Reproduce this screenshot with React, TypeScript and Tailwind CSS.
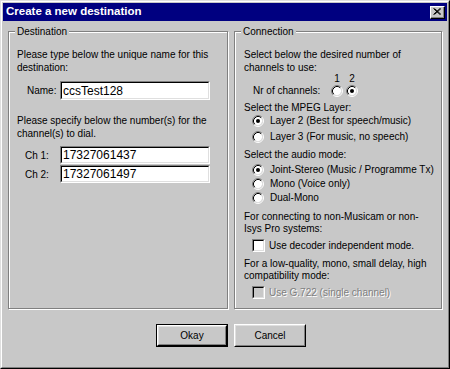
import React from "react";

const Radio = ({ checked = false }: { checked?: boolean }) => (
  <svg width="12" height="12" viewBox="0 0 12 12" className="shrink-0">
    <circle cx="6" cy="6" r="4.2" fill="#fff" />
    <path d="M2.11 9.89 A5.5 5.5 0 0 1 9.89 2.11" fill="none" stroke="#808080" />
    <path d="M9.89 2.11 A5.5 5.5 0 0 1 2.11 9.89" fill="none" stroke="#fff" />
    <path d="M2.82 9.18 A4.5 4.5 0 0 1 9.18 2.82" fill="none" stroke="#000" />
    <path d="M9.18 2.82 A4.5 4.5 0 0 1 2.82 9.18" fill="none" stroke="#dfdfdf" />
    {checked && <circle cx="6" cy="6" r="2" fill="#000" />}
  </svg>
);

const Check = ({ disabled = false }: { disabled?: boolean }) => (
  <div className="h-[13px] w-[13px] shrink-0 border border-t-[#808080] border-l-[#808080] border-b-white border-r-white">
    <div
      className={`h-full w-full border border-t-black border-l-black border-b-[#dfdfdf] border-r-[#dfdfdf] ${
        disabled ? "bg-[#c8c8c8]" : "bg-white"
      }`}
    />
  </div>
);

const Field = ({ value, h }: { value: string; h: string }) => (
  <div className={`w-[150px] ${h} border border-t-[#808080] border-l-[#808080] border-b-white border-r-white`}>
    <div className="flex h-full w-full items-center border border-t-black border-l-black border-b-[#dfdfdf] border-r-[#dfdfdf] bg-white pl-[1px] text-[12px] leading-none">
      {value}
    </div>
  </div>
);

const GroupBox = ({ title, width, children }: { title: string; width: string; children: React.ReactNode }) => (
  <div className={`${width} h-[278px] border border-[#808080] shadow-[inset_1px_1px_0_#fff,1px_1px_0_#fff]`}>
    <div className="-mt-[7px] ml-[6px] w-fit bg-[#c8c8c8] px-[2px] leading-[13px]">{title}</div>
    {children}
  </div>
);

const Button = ({ label, isDefault = false }: { label: string; isDefault?: boolean }) => (
  <div className={`h-[23px] w-[72px] ${isDefault ? "border border-black" : ""}`}>
    <div className="h-full w-full border border-t-white border-l-white border-b-black border-r-black">
      <div className="flex h-full w-full items-center justify-center border border-t-[#dfdfdf] border-l-[#dfdfdf] border-b-[#808080] border-r-[#808080]">
        {label}
      </div>
    </div>
  </div>
);

export default function App() {
  return (
    <div className="h-[369px] w-[450px] border border-t-[#dfdfdf] border-l-[#dfdfdf] border-b-black border-r-black bg-[#c8c8c8] font-['Liberation_Sans',Arial,sans-serif] text-[10px] text-black">
      <div className="h-full w-full border border-t-white border-l-white border-b-[#808080] border-r-[#808080] p-[1px]">
        {/* Title bar */}
        <div className="flex h-[18px] items-center justify-between bg-[#000080] pl-[3px]">
          <span className="text-[11.5px] font-bold text-white">Create a new destination</span>
          <div className="mr-[2px] h-[13px] w-[15px] border border-t-white border-l-white border-b-black border-r-black bg-[#c8c8c8]">
            <div className="flex h-full w-full items-center justify-center border-b border-r border-[#808080]">
              <svg width="8" height="7" viewBox="0 0 8 7">
                <path d="M0.5 0.5 L7 6.5 M1.5 0.5 L8 6.5 M7 0.5 L0.5 6.5 M8 0.5 L1.5 6.5" stroke="#000" strokeWidth="1" />
              </svg>
            </div>
          </div>
        </div>

        {/* Group boxes */}
        <div className="mt-[10px] grid grid-cols-[220px_208px] gap-x-[6px] pl-[5px]">
          <GroupBox title="Destination" width="w-[220px]">
            <div className="whitespace-nowrap px-[8px]">
              <p className="mt-[10px] leading-[13px]">
                Please type below the unique name for this
                <br />
                destination:
              </p>
              <div className="mt-[7px] flex items-center">
                <span className="ml-[10px] w-[33px]">Name:</span>
                <Field value="ccsTest128" h="h-[19px]" />
              </div>
              <p className="mt-[14px] leading-[13px]">
                Please specify below the number(s) for the
                <br />
                channel(s) to dial.
              </p>
              <div className="mt-[6px] flex flex-col gap-[1px]">
                <div className="flex items-center">
                  <span className="ml-[8px] w-[35px]">Ch 1:</span>
                  <Field value="17327061437" h="h-[18px]" />
                </div>
                <div className="flex items-center">
                  <span className="ml-[8px] w-[35px]">Ch 2:</span>
                  <Field value="17327061497" h="h-[18px]" />
                </div>
              </div>
            </div>
          </GroupBox>

          <GroupBox title="Connection" width="w-[208px]">
            <div className="whitespace-nowrap pl-[9px] pr-[2px]">
              <p className="mt-[10px] leading-[13px]">
                Select below the desired number of
                <br />
                channels to use:
              </p>
              <div className="flex h-[10px] items-center leading-[10px]">
                <span className="w-[87px]" />
                <span className="w-[12px] text-center">1</span>
                <span className="ml-[3px] w-[12px] text-center">2</span>
              </div>
              <div className="flex h-[13px] items-center">
                <span className="w-[87px] pl-[9px]">Nr of channels:</span>
                <Radio />
                <span className="ml-[3px]">
                  <Radio checked />
                </span>
              </div>

              <p className="mt-[4px] leading-[13px]">Select the MPEG Layer:</p>
              <div className="flex h-[13px] items-center gap-[6px] pl-[8px]">
                <Radio checked />
                <span>Layer 2 (Best for speech/music)</span>
              </div>
              <div className="mt-[3px] flex h-[13px] items-center gap-[6px] pl-[8px]">
                <Radio />
                <span>Layer 3 (For music, no speech)</span>
              </div>

              <p className="mt-[5px] leading-[13px]">Select the audio mode:</p>
              <div className="mt-[2px] flex h-[13px] items-center gap-[6px] pl-[8px]">
                <Radio checked />
                <span>Joint-Stereo (Music / Programme Tx)</span>
              </div>
              <div className="mt-[1px] flex h-[13px] items-center gap-[6px] pl-[8px]">
                <Radio />
                <span>Mono (Voice only)</span>
              </div>
              <div className="mt-[1px] flex h-[13px] items-center gap-[6px] pl-[8px]">
                <Radio />
                <span>Dual-Mono</span>
              </div>

              <p className="mt-[7px] leading-[12px]">
                For connecting to non-Musicam or non-
                <br />
                Isys Pro systems:
              </p>
              <div className="mt-[4px] flex h-[13px] items-center gap-[4px] pl-[8px]">
                <Check />
                <span>Use decoder independent mode.</span>
              </div>

              <p className="mt-[6px] leading-[12px]">
                For a low-quality, mono, small delay, high
                <br />
                compatibility mode:
              </p>
              <div className="mt-[4px] flex h-[13px] items-center gap-[4px] pl-[8px]">
                <Check disabled />
                <span className="text-[#808080] [text-shadow:1px_1px_0_#fff]">Use G.722 (single channel)</span>
              </div>
            </div>
          </GroupBox>

          {/* Buttons */}
          <div className="mt-[15px] flex justify-end">
            <Button label="Okay" isDefault />
          </div>
          <div className="mt-[15px] flex justify-start">
            <Button label="Cancel" />
          </div>
        </div>
      </div>
    </div>
  );
}
